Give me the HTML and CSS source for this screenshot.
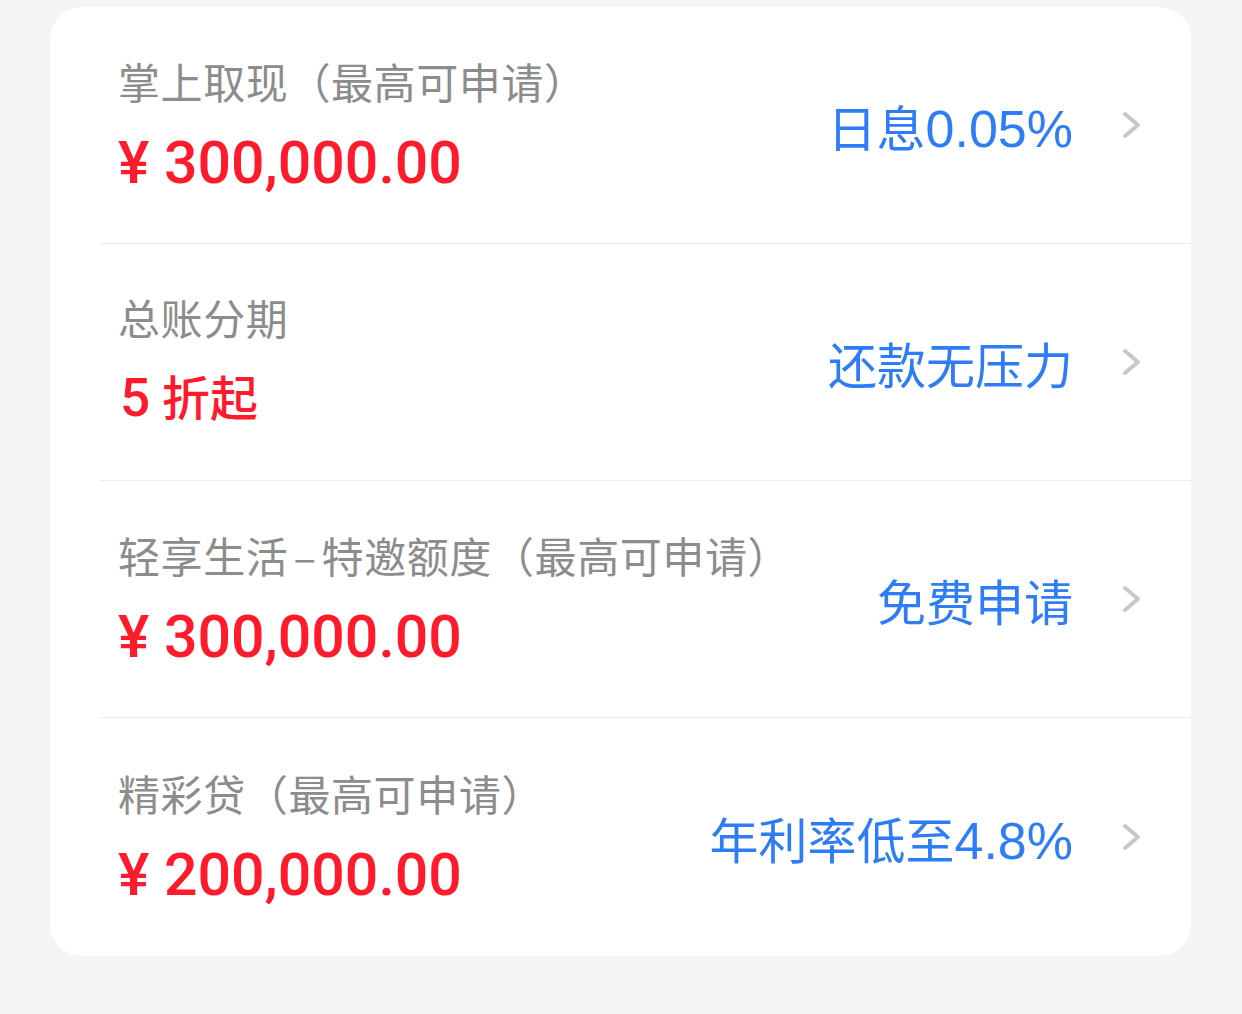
FILE: index.html
```html
<!DOCTYPE html>
<html lang="zh-CN">
<head>
    <meta charset="UTF-8">
    <meta name="viewport" content="width=device-width, initial-scale=1.0">
    <title>额度与分期</title>
    <link rel="stylesheet" href="styles.css">
</head>
<body>
    <main class="card">
        <a class="row" href="#">
            <div class="info">
                <p class="title">掌上取现（最高可申请）</p>
                <p class="amount">¥ 300,000.00</p>
            </div>
            <span class="tag">日息<span class="num">0.05%</span></span>
            <svg class="chevron" width="20" height="28" viewBox="0 0 20 28"><path d="M3 3 L16 14 L3 25"/></svg>
        </a>
        <a class="row" href="#">
            <div class="info">
                <p class="title">总账分期</p>
                <p class="amount amount-cn"><span class="num">5</span> 折起</p>
            </div>
            <span class="tag">还款无压力</span>
            <svg class="chevron" width="20" height="28" viewBox="0 0 20 28"><path d="M3 3 L16 14 L3 25"/></svg>
        </a>
        <a class="row" href="#">
            <div class="info">
                <p class="title">轻享生活<span class="dash">–</span>特邀额度（最高可申请）</p>
                <p class="amount">¥ 300,000.00</p>
            </div>
            <span class="tag">免费申请</span>
            <svg class="chevron" width="20" height="28" viewBox="0 0 20 28"><path d="M3 3 L16 14 L3 25"/></svg>
        </a>
        <a class="row last" href="#">
            <div class="info">
                <p class="title">精彩贷（最高可申请）</p>
                <p class="amount">¥ 200,000.00</p>
            </div>
            <span class="tag">年利率低至<span class="num">4.8%</span></span>
            <svg class="chevron" width="20" height="28" viewBox="0 0 20 28"><path d="M3 3 L16 14 L3 25"/></svg>
        </a>
    </main>
</body>
</html>
```

FILE: styles.css
```css
body {
    margin: 0;
    padding: 7px 51px 0 50px;
    background-color: #f5f5f5;
    font-family: "Liberation Sans", "Noto Sans CJK SC", sans-serif;
    min-height: 100vh;
    box-sizing: border-box;
}

.card {
    background: #fff;
    border-radius: 32px;
    overflow: hidden;
}

.row {
    display: flex;
    align-items: center;
    height: 236px;
    margin-left: 50px;
    padding: 0 49px 0 18px;
    border-bottom: 1px solid #ededed;
    text-decoration: none;
}

.row.last {
    border-bottom: none;
    height: 238px;
}

.info {
    flex: 1;
}

.title {
    margin: 0 0 26px;
    font-family: "Noto Sans CJK SC", sans-serif;
    font-size: 42px;
    line-height: 48px;
    letter-spacing: 0.6px;
    color: #8c8c8c;
}

.title .dash {
    padding: 0 5px;
}

.amount {
    margin: 0;
    font-family: Roboto, "Noto Sans CJK SC", sans-serif;
    font-weight: 500;
    font-size: 59px;
    line-height: 63px;
    color: #ff1b2c;
}

.amount-cn {
    font-size: 48px;
    padding-left: 2px;
}

.amount-cn .num {
    font-size: 53px;
}

.tag {
    font-size: 49px;
    color: #2f7df6;
    white-space: nowrap;
}

.tag .num {
    font-size: 52px;
}

.chevron {
    margin-left: 49px;
    flex-shrink: 0;
}

.chevron path {
    fill: none;
    stroke: #c8c8c8;
    stroke-width: 4;
    stroke-linecap: round;
    stroke-linejoin: round;
}
```
